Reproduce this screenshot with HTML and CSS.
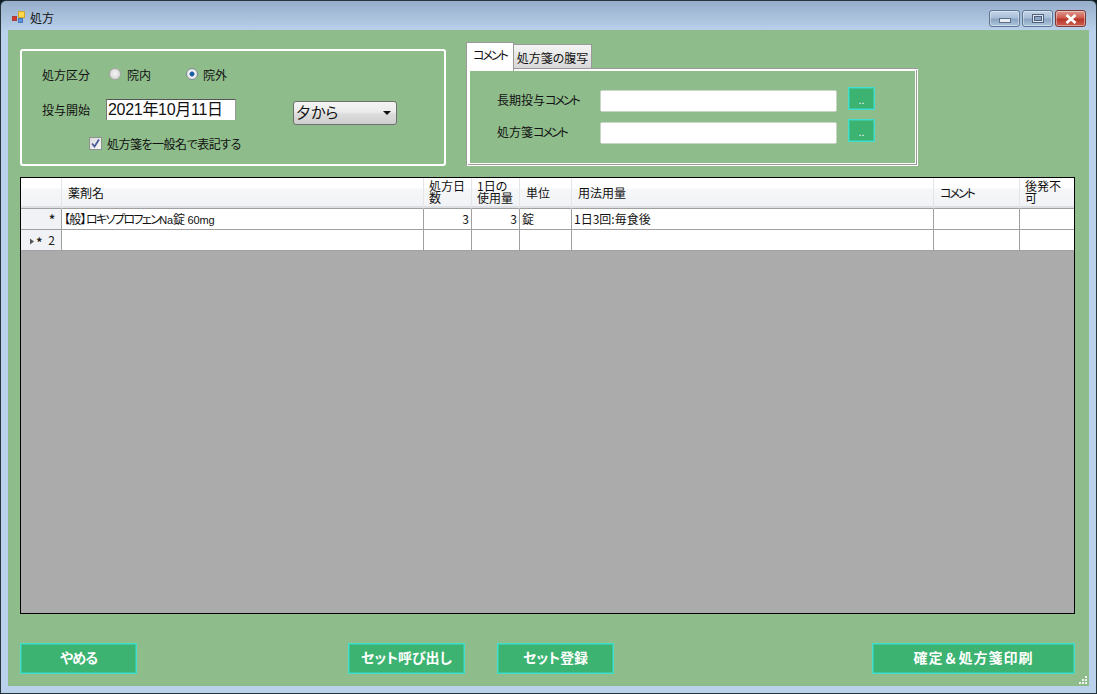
FILE: index.html
```html
<!DOCTYPE html>
<html lang="ja">
<head>
<meta charset="utf-8">
<title>処方</title>
<link rel="stylesheet" href="styles.css">
</head>
<body>
<div class="window">
  <header class="titlebar">
    <svg class="app-icon" width="16" height="16" viewBox="0 0 16 16">
      <rect x="1.5" y="6.5" width="4" height="4" fill="#d9362b" stroke="#a8403a"/>
      <rect x="7.5" y="1.5" width="6" height="6" fill="#ffd54a" stroke="#d0a52c"/>
      <rect x="7.5" y="8.5" width="4" height="4" fill="#5b93dc" stroke="#4a78b8"/>
    </svg>
    <span class="title">処方</span>
    <div class="caption-buttons">
      <div class="cap-btn"><span class="glyph-min"></span></div>
      <div class="cap-btn"><span class="glyph-max"></span></div>
      <div class="cap-btn cap-close">
        <svg width="14" height="10" viewBox="0 0 14 10"><path d="M2.5 1 L11.5 9 M11.5 1 L2.5 9" stroke="#fff" stroke-width="2.8" fill="none"/></svg>
      </div>
    </div>
  </header>
  <main class="client">
    <section class="top">
      <div class="groupbox">
        <div class="row row-kind">
          <span class="label">処方区分</span>
          <span class="radio"></span><span class="opt opt-in">院内</span>
          <span class="radio radio-on"></span><span class="opt">院外</span>
        </div>
        <div class="row row-date">
          <span class="label">投与開始</span>
          <div class="date">2021年10月11日</div>
          <div class="combo"><span class="combo-text">夕から</span><i class="arrow"></i></div>
        </div>
        <div class="row row-check">
          <span class="check">
            <svg width="11" height="11" viewBox="0 0 11 11"><path d="M2 5.5 L4.5 8.5 L9 1.5" stroke="#4a5a9a" stroke-width="1.8" fill="none"/></svg>
          </span>
          <span class="check-text">処方箋を一般名で表記する</span>
        </div>
      </div>
      <div class="tabs">
        <div class="tabstrip">
          <div class="tab tab-active"><span class="narrow">コメント</span></div>
          <div class="tab">処方箋の腹写</div>
        </div>
        <div class="tabpanel">
          <div class="panel-inner">
            <div class="field">
              <span class="field-label">長期投与<span class="narrow">コメント</span></span>
              <div class="textbox"></div>
              <div class="dots">..</div>
            </div>
            <div class="field">
              <span class="field-label">処方箋<span class="narrow">コメント</span></span>
              <div class="textbox"></div>
              <div class="dots">..</div>
            </div>
          </div>
        </div>
      </div>
    </section>
    <section class="grid">
      <table>
        <colgroup>
          <col class="c-head"><col class="c-name"><col class="c-days"><col class="c-qty"><col class="c-unit"><col class="c-usage"><col class="c-comment"><col class="c-gen">
        </colgroup>
        <thead>
          <tr>
            <th></th>
            <th class="pad">薬剤名</th>
            <th class="wrap">処方日<br>数</th>
            <th class="wrap">1日の<br>使用量</th>
            <th class="pad">単位</th>
            <th class="pad">用法用量</th>
            <th class="pad"><span class="narrow">コメント</span></th>
            <th class="wrap">後発不<br>可</th>
          </tr>
        </thead>
        <tbody>
          <tr>
            <th class="rowhead"><b>*</b></th>
            <td class="drug"><span class="bracket">【般】</span><span class="kana">ロキソプロフェン</span><span class="latin">Na</span>錠 <span class="latin">60mg</span></td>
            <td class="num">3</td>
            <td class="num">3</td>
            <td>錠</td>
            <td>1日3回:毎食後</td>
            <td></td>
            <td></td>
          </tr>
          <tr>
            <th class="rowhead"><span class="newrow"><svg width="6" height="7" viewBox="0 0 6 7"><path d="M1 0.5 L5 3.5 L1 6.5 Z" fill="#555"/></svg><b>*</b></span>2</th>
            <td></td><td></td><td></td><td></td><td></td><td></td><td></td>
          </tr>
        </tbody>
      </table>
    </section>
    <section class="actions">
      <button class="act act-quit">やめる</button>
      <button class="act act-call">セット呼び出し</button>
      <button class="act act-reg">セット登録</button>
      <button class="act act-print">確定＆処方箋印刷</button>
    </section>
    <svg class="grip" width="10" height="10" viewBox="0 0 10 10" fill="#f4f4f4">
      <rect x="7" y="1" width="2" height="2"/><rect x="7" y="4" width="2" height="2"/><rect x="7" y="7" width="2" height="2"/>
      <rect x="4" y="4" width="2" height="2"/><rect x="4" y="7" width="2" height="2"/><rect x="1" y="7" width="2" height="2"/>
    </svg>
  </main>
</div>
</body>
</html>
```

FILE: styles.css
```css
* { box-sizing: border-box; }
html, body { margin: 0; padding: 0; background: #0d1a20; }
body {
  width: 1097px;
  height: 694px;
  overflow: hidden;
  font-family: "Noto Sans CJK JP", "Liberation Sans", sans-serif;
  font-size: 12px;
  color: #111;
  font-feature-settings: "palt";
}
.window {
  width: 1097px;
  height: 694px;
  border: 1px solid #26343c;
  border-radius: 6px 6px 0 0;
  padding: 0 7px 7px;
  display: flex;
  flex-direction: column;
  background: linear-gradient(180deg, #97aecb 0, #b9d1ea 30px);
}
.titlebar {
  height: 29px;
  flex: none;
  display: flex;
  align-items: center;
  padding: 4px 0 0 3px;
  gap: 3px;
}
.app-icon { flex: none; }
.title { font-size: 12px; }
.caption-buttons { margin-left: auto; display: flex; gap: 2px; align-self: flex-start; margin-top: 5px; margin-right: 3px; }
.cap-btn {
  width: 31px;
  height: 17px;
  border: 1px solid #5f7690;
  border-radius: 3px;
  background: linear-gradient(180deg, #c4d5e8 0, #a9bfd8 45%, #8ba5c2 55%, #aec5dd 100%);
  box-shadow: inset 0 0 0 1px rgba(255,255,255,.4);
  display: flex;
  align-items: center;
  justify-content: center;
}
.cap-close { background: linear-gradient(180deg, #dd9a90 0, #cf5c4e 45%, #b8362a 55%, #c95f50 100%); border-color: #7c3a34; }
.glyph-min { width: 12px; height: 5px; margin-top: 4px; background: #e8eef5; border: 1px solid #5d6f85; }
.glyph-max { width: 12px; height: 9px; background: #dfe8f2; border: 1px solid #4f6178; }
.glyph-max::after { content: ""; display: block; width: 6px; height: 3px; margin: 1px auto 0; background: #8ba5c2; border: 1px solid #4f6178; }

.client {
  flex: 1;
  position: relative;
  background: #8fbc8b;
  padding: 12px 14px 12px 12px;
  display: flex;
  flex-direction: column;
}
.top { display: flex; align-items: flex-end; gap: 20px; height: 124px; flex: none; }

.groupbox {
  width: 426px;
  height: 117px;
  border: 2px solid #fff;
  border-radius: 3px;
  padding: 13px 0 0 20px;
  flex: none;
}
.row { display: flex; align-items: center; }
.row-kind { height: 20px; }
.label { width: 67px; flex: none; }
.radio {
  width: 12px;
  height: 12px;
  border-radius: 50%;
  border: 1px solid #a5a5a5;
  background: radial-gradient(circle at 50% 45%, #f4f4f4, #d0d0d0);
  flex: none;
  margin-right: 6px;
}
.radio-on {
  background: radial-gradient(circle, #16508f 0, #2a6fb0 32%, #f2f2f2 40%, #e0e0e0 100%);
  border-color: #7d8a96;
  margin-right: 5px;
}
.opt-in { width: 59px; flex: none; }
.row-date { height: 26px; margin-top: 15px; align-items: flex-start; }
.row-date .label { width: 64px; line-height: 21px; }
.date {
  width: 130px;
  height: 21px;
  background: #fff;
  border-top: 1px solid #555;
  border-left: 1px solid #777;
  border-right: 1px solid #999;
  font-size: 16px;
  line-height: 19px;
  padding-left: 1px;
  letter-spacing: -.3px;
  font-family: "Liberation Sans", "Noto Sans CJK JP", sans-serif;
  white-space: nowrap;
  flex: none;
}
.combo {
  margin: 2px 0 0 57px;
  width: 104px;
  height: 24px;
  border: 1px solid #6f6f6f;
  border-radius: 3px;
  background: linear-gradient(180deg, #f4f4f4 0, #ebebeb 45%, #dcdcdc 55%, #cfcfcf 100%);
  display: flex;
  align-items: center;
  padding: 0 5px 0 2px;
  font-size: 15px;
  flex: none;
}
.combo-text { line-height: 20px; margin-bottom: 2px; }
.arrow {
  margin-left: auto;
  width: 0;
  height: 0;
  border: 4px solid transparent;
  border-top-color: #111;
  border-bottom-width: 0;
}
.row-check { height: 20px; margin-top: 8px; padding-left: 47px; gap: 5px; }
.check {
  width: 13px;
  height: 13px;
  border: 1px solid #8e8f8f;
  background: linear-gradient(135deg, #dcdcdc, #f8f8f8);
  display: flex;
  align-items: center;
  justify-content: center;
  flex: none;
}
.check-text { letter-spacing: -.5px; }

.narrow { letter-spacing: -2px; }

.tabs { width: 452px; flex: none; display: flex; flex-direction: column; height: 124px; }
.tabstrip { height: 26px; display: flex; align-items: flex-end; position: relative; z-index: 1; flex: none; }
.tab {
  height: 24px;
  width: 78px;
  border: 1px solid #9a9a9a;
  border-left: 0;
  border-bottom: 0;
  background: linear-gradient(180deg, #f4f4f4, #d8d8d8);
  text-align: center;
  line-height: 25px;
  white-space: nowrap;
}
.tab-active {
  height: 29px;
  width: 48px;
  margin-bottom: -3px;
  border: 1px solid #9a9a9a;
  border-bottom: 0;
  background: #fff;
  line-height: 24px;
}
.tabpanel {
  flex: 1;
  background: #fff;
  border: 1px solid #9a9a9a;
  border-width: 1px 0 0 1px;
  padding: 0 2px 2px 0;
  min-height: 0;
}
.panel-inner {
  height: 100%;
  background: #8fbc8b;
  border: solid #fff;
  border-width: 2px 1px 1px 3px;
  box-shadow: 1px 1px 0 #9a9a9a;
  padding: 19px 0 0 27px;
}
.field { display: flex; align-items: flex-start; height: 32px; }
.field-label { width: 103px; line-height: 20px; flex: none; white-space: nowrap; }
.textbox {
  width: 237px;
  height: 22px;
  background: #fff;
  border: 1px solid #c8d4c6;
  border-radius: 2px;
  flex: none;
}
.dots {
  margin: -3px 0 0 11px;
  width: 27px;
  height: 23px;
  background: #3cb371;
  border: 1px solid #40e0d0;
  box-shadow: inset 0 0 0 1px rgba(64,224,208,.45);
  color: #fff;
  font-size: 11px;
  text-align: center;
  line-height: 24px;
  flex: none;
  font-family: "Liberation Sans", sans-serif;
}

.grid {
  margin-top: 11px;
  flex: 1;
  min-height: 0;
  background: #ababab;
  border: 1px solid #000;
  overflow: hidden;
}
table { border-collapse: separate; border-spacing: 0; table-layout: fixed; width: 1053px; }
.c-head { width: 41px; }
.c-name { width: 362px; }
.c-days { width: 48px; }
.c-qty { width: 48px; }
.c-unit { width: 52px; }
.c-usage { width: 362px; }
.c-comment { width: 86px; }
.c-gen { width: 54px; }
thead th {
  height: 31px;
  font-weight: 400;
  text-align: left;
  vertical-align: middle;
  background: linear-gradient(180deg, #fff 0, #fff 33%, #f6f7f9 36%, #f1f2f5 100%);
  border-right: 1px solid #e4e5e8;
  border-bottom: 1px solid #a0a0a0;
  padding: 0 0 2px 5px;
  box-shadow: inset 0 -2px 0 #dddfe2;
  white-space: nowrap;
}
thead th.wrap { line-height: 12px; }
thead th.pad { padding-left: 6px; }
thead th:last-child { border-right: 0; }
tbody td, tbody th {
  height: 21px;
  background: #fff;
  border-right: 1px solid #a0a0a0;
  border-bottom: 1px solid #a0a0a0;
  padding: 0 2px;
  font-weight: 400;
  line-height: 16px;
  vertical-align: middle;
  white-space: nowrap;
  overflow: hidden;
}
tbody td:last-child { border-right: 0; }
tbody th.rowhead {
  background: #f1f2f5;
  text-align: right;
  padding: 0 6px 0 0;
  color: #222;
}
.rowhead b { font-size: 12px; font-weight: 700; line-height: 12px; }
.newrow { display: inline-flex; align-items: center; gap: 1px; margin-right: 6px; height: 12px; }
.num { text-align: right; }
.bracket { letter-spacing: -.7px; }
.kana { letter-spacing: -1.6px; }
.latin { font-family: "Liberation Sans", sans-serif; font-size: 11px; letter-spacing: -.2px; line-height: 12px; }

.actions { margin-top: 29px; height: 31px; flex: none; display: flex; }
.act {
  width: 117px;
  height: 31px;
  background: #3cb371;
  border: 1px solid #40e0d0;
  box-shadow: inset 0 0 0 1px rgba(64,224,208,.45);
  color: #fff;
  font: 700 14px "Noto Sans CJK JP", sans-serif;
  padding: 0 0 3px;
  border-radius: 0;
  font-feature-settings: "palt";
}
.act-quit { letter-spacing: -1px; }
.act-call { margin-left: 211px; }
.act-reg { margin-left: 32px; }
.act-print { margin-left: auto; width: 203px; font-feature-settings: normal; letter-spacing: 1px; }
.grip { position: absolute; right: 1px; bottom: 1px; }
```
